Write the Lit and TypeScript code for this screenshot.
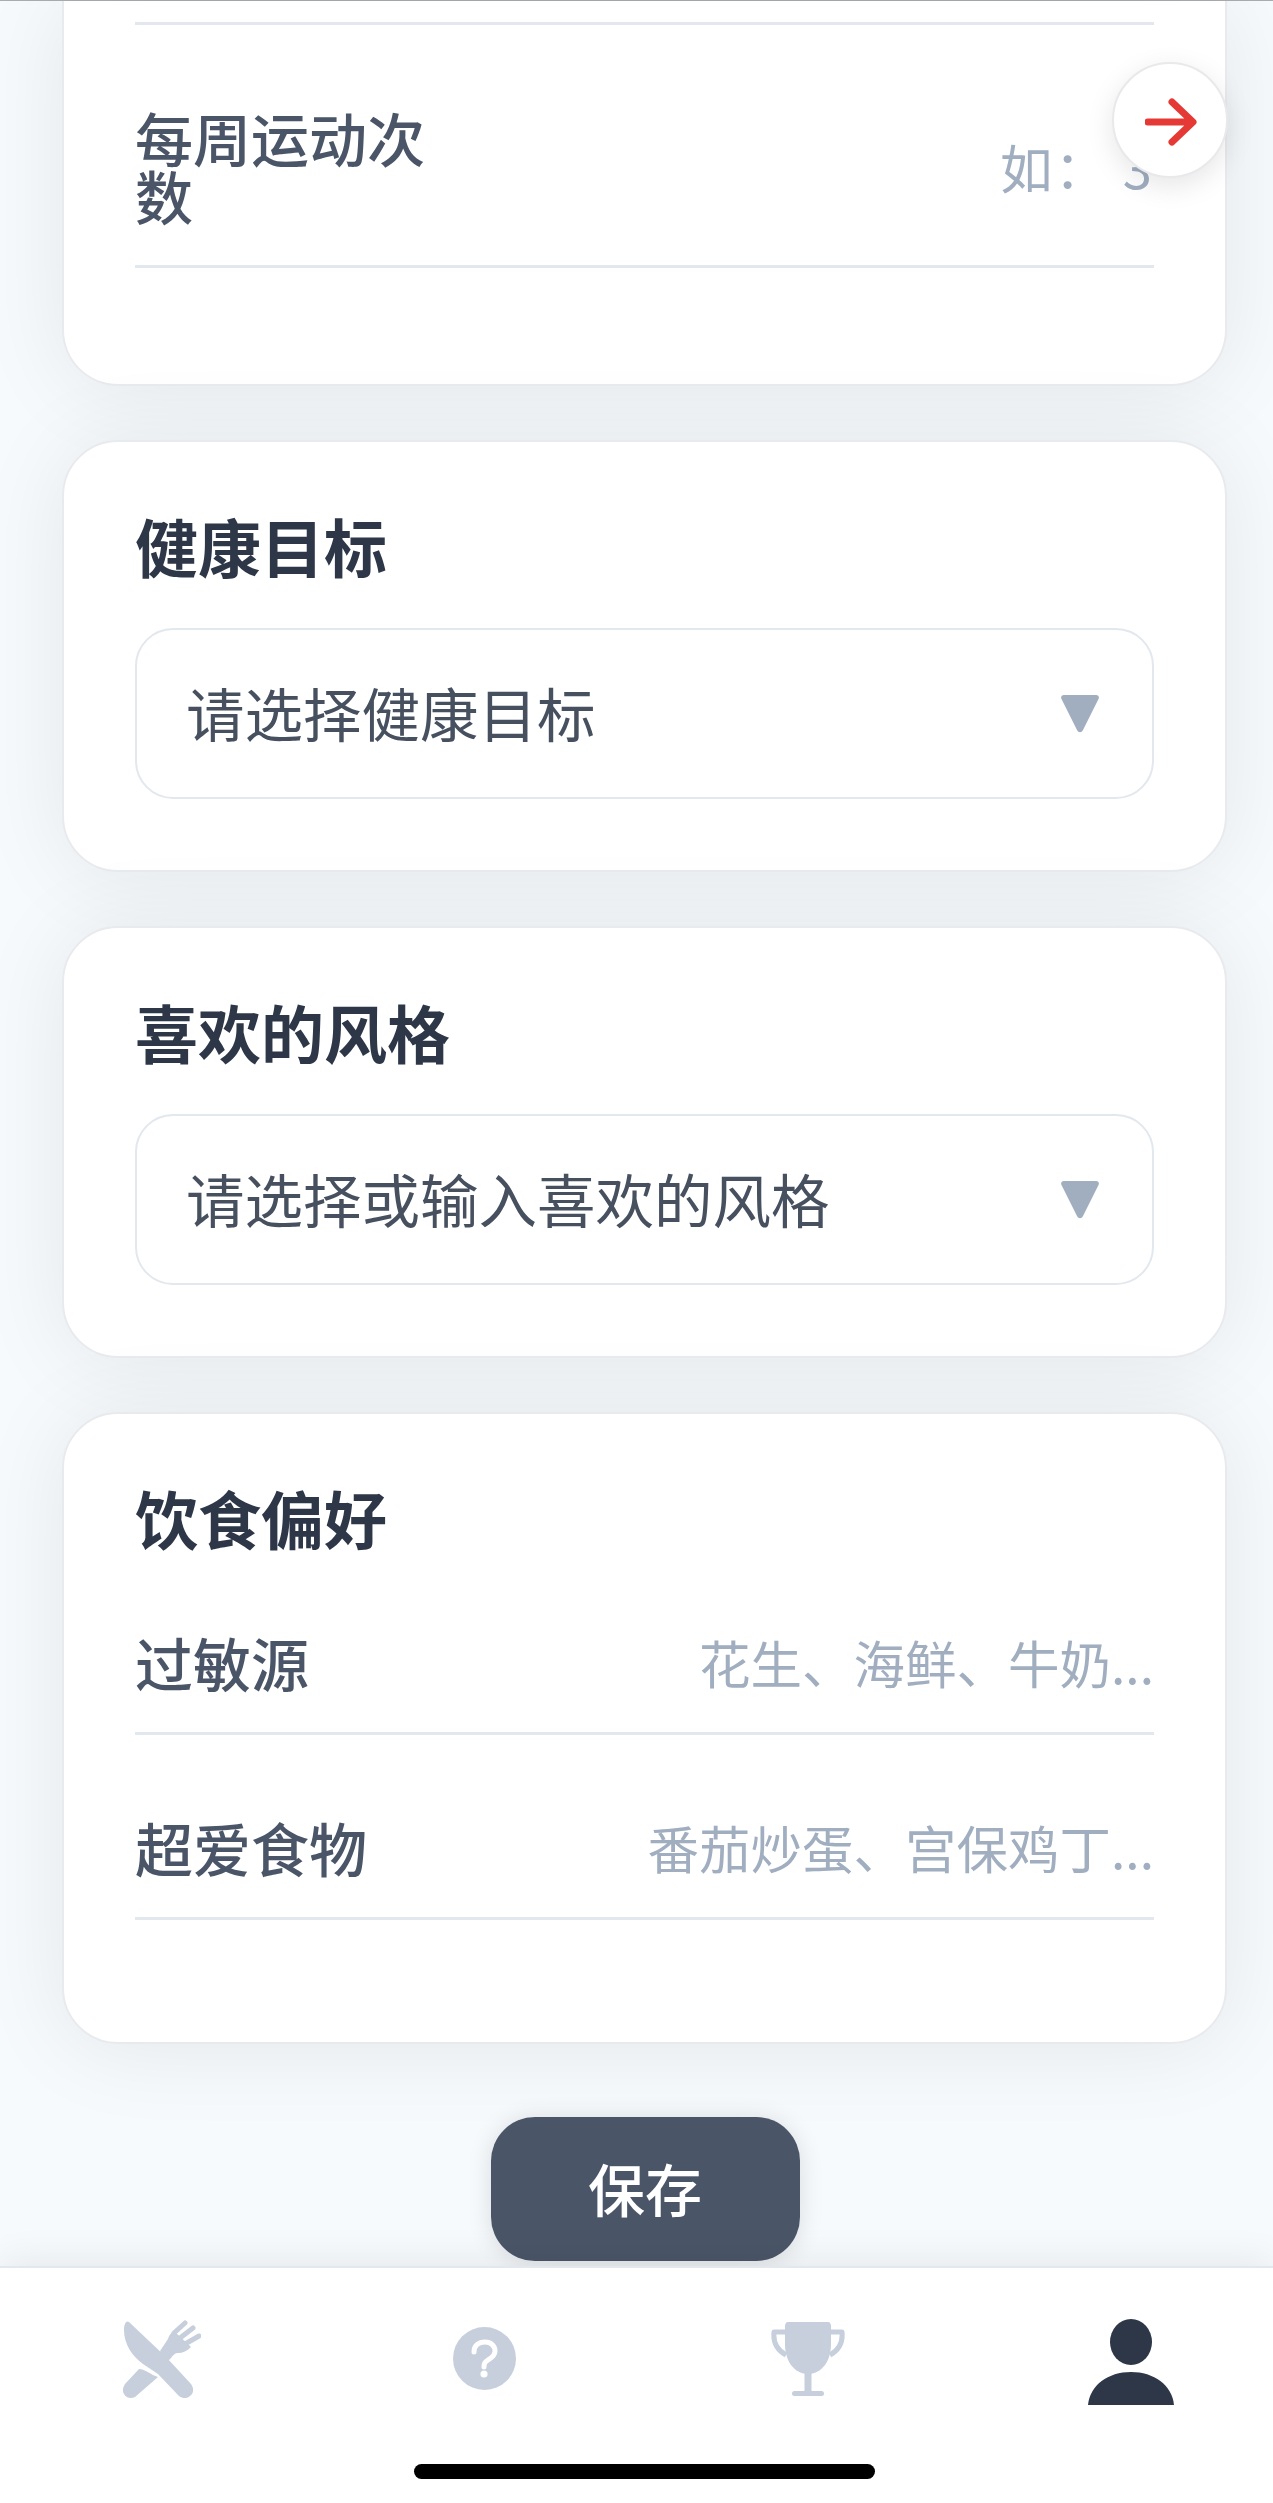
import { LitElement, html, css, svg } from "lit";
import { customElement } from "lit/decorators.js";

const forkIcon = svg`
  <path d="M6 2 C3 0 1 4 1 10 C1 24 9 36 20 44 L35 54 L55 75 C59 79 64 79 67 76 C71 73 71 68 68 64 L44 38 Z" />
  <path d="M16 49 C22 49 28 55 35 57 L12 77 C8 79 3 78 1 74 C-1 71 0 67 2 64 Z" />
  <path d="M37 31 L45 19 C46 15 48 13 51 11 L68 27 C64 31 60 33 55 33 C52 33 50 35 48 38 L42 44 Z" />
  <path d="M51 13 L62 3 M57 18 L70 8 M62 24 L76 16" fill="none" stroke="currentColor" stroke-width="5" stroke-linecap="round" />
`;

const trophyIcon = svg`
  <path d="M17 0 H57 C59 0 60 2 60 4 V22 C60 40 50 52 37 52 C24 52 14 40 14 22 V4 C14 2 15 0 17 0 Z" />
  <path d="M15 10 H3 C2 20 6 28 15 33 M59 10 H71 C72 20 68 28 59 33" fill="none" stroke="currentColor" stroke-width="5" stroke-linejoin="round" />
  <rect x="33.5" y="50" width="7" height="20" />
  <rect x="21" y="69" width="32" height="5" rx="2.5" />
`;

@customElement("app-root")
export class AppRoot extends LitElement {
  static styles = css`
    :host {
      display: block;
      position: relative;
      width: 1273px;
      height: 2503px;
      overflow: hidden;
      font-family: "Noto Sans CJK SC", "Noto Sans", sans-serif;
      background: #f6fafd;
    }

    .page {
      display: flex;
      flex-direction: column;
      height: 100%;
      border-top: 1px solid #a9adb0;
      box-sizing: border-box;
    }

    .content {
      flex: 1;
      display: flex;
      flex-direction: column;
      gap: 54px;
      padding: 0 46px 0 62px;
    }

    .card {
      background: #fff;
      border: 2px solid #e8eaee;
      border-radius: 56px;
      padding: 73px 71px 71px;
      box-shadow: 0 4px 90px rgba(0, 0, 0, 0.08);
    }

    .card.first {
      border-top: 0;
      border-radius: 0 0 56px 56px;
      padding-top: 21px;
      padding-bottom: 116px;
    }

    .card.list {
      padding-bottom: 122px;
    }

    .top-line {
      height: 3px;
      background: #e2e8ee;
    }

    h2 {
      margin: 0;
      font-size: 63px;
      line-height: 60px;
      font-weight: 700;
      color: #2d3748;
    }

    h2 + .row {
      margin-top: 86px;
    }

    .row {
      display: flex;
      align-items: center;
      margin-top: 83px;
      padding-bottom: 41px;
      border-bottom: 3px solid #e2e8ee;
    }

    .row .label {
      flex: 0 0 320px;
      font-size: 58px;
      line-height: 58px;
      font-weight: 500;
      color: #4a5568;
    }

    .row .hint {
      flex: 1;
      text-align: right;
      white-space: nowrap;
      font-size: 51.5px;
      line-height: 58px;
      color: #a0aec0;
    }

    .row .hint.wide {
      font-size: 52.5px;
      letter-spacing: 2px;
    }

    .select {
      display: flex;
      align-items: center;
      justify-content: space-between;
      box-sizing: border-box;
      height: 171px;
      margin-top: 53px;
      padding: 0 53px 0 49px;
      border: 2px solid #e2e8ee;
      border-radius: 38px;
      font-size: 58.5px;
      color: #46505f;
    }

    .select span {
      margin-bottom: 5px;
    }

    .select svg {
      display: block;
      width: 38px;
      height: 38px;
      fill: #a0aec0;
    }

    .save-wrap {
      display: flex;
      justify-content: center;
      padding: 60px 46px 5px 63px;
    }

    .save {
      width: 309px;
      height: 144px;
      box-sizing: border-box;
      padding-bottom: 5px;
      border-radius: 44px;
      background: #4a5568;
      color: #fff;
      font-size: 57px;
      font-weight: 500;
      display: flex;
      align-items: center;
      justify-content: center;
      box-shadow: 0 2px 24px rgba(0, 0, 0, 0.12);
    }

    nav {
      position: relative;
      flex: 0 0 237px;
      box-sizing: border-box;
      background: #fff;
      border-top: 2px solid #e2e8ee;
      box-shadow: 0 -6px 36px rgba(0, 0, 0, 0.07);
    }

    .tabs {
      display: grid;
      grid-template-columns: repeat(4, 323px);
      height: 160px;
      color: #c6cfdb;
    }

    .tab {
      display: flex;
      justify-content: center;
      align-items: flex-start;
    }

    .tab svg {
      display: block;
      fill: currentColor;
    }

    .tab.active {
      color: #2d3748;
    }

    .fork {
      margin-top: 52px;
    }

    .help {
      margin-top: 59px;
    }

    .trophy {
      margin-top: 54px;
    }

    .person {
      margin-top: 51px;
    }

    .home-bar {
      width: 461px;
      height: 15px;
      margin: 36px 0 0 414px;
      border-radius: 8px;
      background: #000;
    }

    .next {
      position: absolute;
      left: 1112px;
      top: 62px;
      width: 116px;
      height: 116px;
      box-sizing: border-box;
      border-radius: 50%;
      background: #fff;
      border: 2px solid #e9e9ec;
      box-shadow: 0 8px 28px rgba(0, 0, 0, 0.1);
      display: flex;
      align-items: center;
      justify-content: center;
    }

    .next svg {
      display: block;
      width: 52px;
      height: 48px;
      margin-left: 2px;
      margin-top: 4px;
    }
  `;

  renderCaret() {
    return html`<svg viewBox="0 0 38 38">
      <path d="M3 0 H35 C37.5 0 38.5 2 37.5 4 L22 35 C20.5 38 17.5 38 16 35 L0.5 4 C-0.5 2 0.5 0 3 0 Z" />
    </svg>`;
  }

  render() {
    return html`
      <div class="page">
        <div class="content">
          <section class="card first">
            <div class="top-line"></div>
            <div class="row">
              <div class="label">每周运动次数</div>
              <div class="hint wide">如： 3</div>
            </div>
          </section>

          <section class="card">
            <h2>健康目标</h2>
            <div class="select"><span>请选择健康目标</span>${this.renderCaret()}</div>
          </section>

          <section class="card">
            <h2>喜欢的风格</h2>
            <div class="select"><span>请选择或输入喜欢的风格</span>${this.renderCaret()}</div>
          </section>

          <section class="card list">
            <h2>饮食偏好</h2>
            <div class="row">
              <div class="label">过敏源</div>
              <div class="hint">花生、海鲜、牛奶...</div>
            </div>
            <div class="row">
              <div class="label">超爱食物</div>
              <div class="hint">番茄炒蛋、宫保鸡丁...</div>
            </div>
          </section>
        </div>

        <div class="save-wrap"><div class="save">保存</div></div>

        <nav>
          <div class="tabs">
            <div class="tab">
              <svg class="fork" width="78" height="78" viewBox="0 0 78 78">${forkIcon}</svg>
            </div>
            <div class="tab">
              <svg class="help" width="63" height="63" viewBox="0 0 63 63">
                <circle cx="31.5" cy="31.5" r="31.5" />
                <path d="M21 25 C21 18 26 15 32 15 C38 15 42 19 42 24 C42 29 38 31 35 33 C32 35 31 36 31 40" fill="none" stroke="#fff" stroke-width="5" stroke-linecap="round" />
                <circle cx="31" cy="47" r="3.6" fill="#fff" />
              </svg>
            </div>
            <div class="tab">
              <svg class="trophy" width="74" height="74" viewBox="0 0 74 74">${trophyIcon}</svg>
            </div>
            <div class="tab active">
              <svg class="person" width="86" height="86" viewBox="0 0 86 86">
                <ellipse cx="43" cy="23" rx="21" ry="23" />
                <path d="M0 86 C2 66 20 53 43 53 C66 53 84 66 86 86 Z" />
              </svg>
            </div>
          </div>
          <div class="home-bar"></div>
        </nav>
      </div>

      <div class="next">
        <svg viewBox="0 0 52 48">
          <path d="M3 24 H47 M27 4 L48 24 L27 44" fill="none" stroke="#e53935" stroke-width="7" stroke-linecap="round" stroke-linejoin="round" />
        </svg>
      </div>
    `;
  }
}
